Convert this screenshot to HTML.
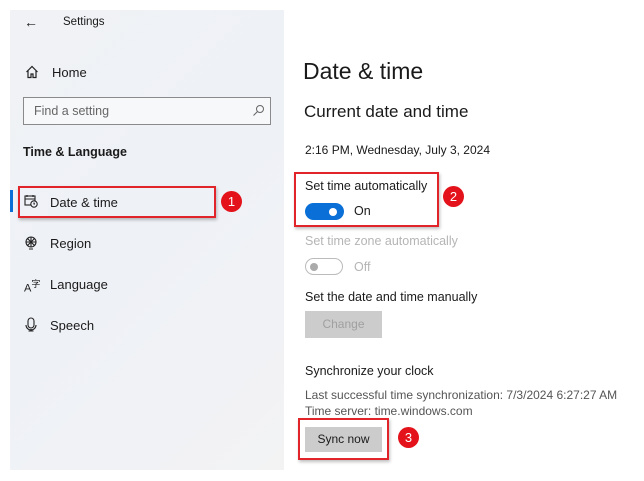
<!DOCTYPE html>
<html><head><meta charset="utf-8"><style>
*{margin:0;padding:0;box-sizing:border-box}
body{width:644px;height:481px;background:#fff;font-family:"Liberation Sans",sans-serif;color:#1a1a1a;position:relative;overflow:hidden}
.a{position:absolute;white-space:nowrap}
#side{position:absolute;left:10px;top:10px;width:274px;height:460px;background:linear-gradient(135deg,#f0f2f5,#eef1f6 50%,#f3f3f4)}
.box{position:absolute;border:2px solid #e0242a;box-shadow:1px 2px 3px rgba(0,0,0,.25)}
.badge{position:absolute;width:21px;height:21px;border-radius:50%;background:#e4121a;color:#fff;font-size:13px;text-align:center;line-height:21px}
.btn{position:absolute;background:#cccccc;font-size:12px;text-align:center}
</style></head><body>
<div id="side"></div>
<div class="a" style="left:24px;top:14px;font-size:14px">←</div>
<div class="a" style="left:63px;top:16px;font-size:11.5px">Settings</div>
<svg class="a" style="left:25px;top:65px" width="14" height="14" viewBox="0 0 14 14" fill="none" stroke="#222" stroke-width="1.2"><path d="M1.5 7L7 1.5 12.5 7M3 5.5V12.5H6V9H8V12.5H11V5.5"/></svg>
<div class="a" style="left:52px;top:65px;font-size:13px">Home</div>
<div class="a" style="left:23px;top:97px;width:248px;height:28px;border:1px solid #8a8a8a;background:#f7f8fa"></div>
<div class="a" style="left:34px;top:104px;font-size:12.5px;color:#666">Find a setting</div>
<svg class="a" style="left:252px;top:104px" width="13" height="13" viewBox="0 0 13 13" fill="none" stroke="#666" stroke-width="1"><circle cx="8" cy="5" r="3.5"/><path d="M5.5 7.5L1.5 11.5"/></svg>
<div class="a" style="left:23px;top:145px;font-size:12.5px;font-weight:bold">Time &amp; Language</div>
<div class="a" style="left:10px;top:190px;width:3px;height:22px;background:#0a6fd6"></div>
<svg class="a" style="left:24px;top:194px" width="14" height="14" viewBox="0 0 14 14" fill="none" stroke="#222" stroke-width="1.1"><rect x="1" y="2" width="10" height="9"/><path d="M1 5H11M3 1V3M9 1V3"/><circle cx="10" cy="10" r="3.2" fill="#eef1f6"/><path d="M10 8.5V10H11"/></svg>
<div class="a" style="left:50px;top:195px;font-size:13px">Date &amp; time</div>
<div class="box" style="left:18px;top:186px;width:198px;height:32px"></div>
<div class="badge" style="left:221px;top:191px">1</div>
<svg class="a" style="left:24px;top:236px" width="14" height="14" viewBox="0 0 14 14" fill="none" stroke="#222" stroke-width="1.1"><circle cx="7" cy="6" r="5"/><path d="M2 6H12M7 1V11M3.5 2.5L10.5 9.5M10.5 2.5L3.5 9.5M5 13H9"/></svg>
<div class="a" style="left:50px;top:236px;font-size:13px">Region</div>
<div class="a" style="left:24px;top:277px;font-size:11px">A<sup style="font-size:9px">字</sup></div>
<div class="a" style="left:50px;top:277px;font-size:13px">Language</div>
<svg class="a" style="left:25px;top:317px" width="12" height="15" viewBox="0 0 12 15" fill="none" stroke="#222" stroke-width="1.1"><rect x="3" y="1" width="6" height="10" rx="3"/><path d="M1 8a5 5 0 0 0 10 0M6 12V14M3.5 14H8.5"/></svg>
<div class="a" style="left:50px;top:318px;font-size:13px">Speech</div>

<div class="a" style="left:303px;top:58px;font-size:23px">Date &amp; time</div>
<div class="a" style="left:304px;top:102px;font-size:17px">Current date and time</div>
<div class="a" style="left:305px;top:143px;font-size:12px">2:16 PM, Wednesday, July 3, 2024</div>
<div class="box" style="left:294px;top:172px;width:145px;height:55px"></div>
<div class="a" style="left:305px;top:179px;font-size:12.5px">Set time automatically</div>
<div class="a" style="left:305px;top:203px;width:39px;height:17px;border-radius:9px;background:#0a6fd6"></div>
<div class="a" style="left:329px;top:208px;width:8px;height:8px;border-radius:50%;background:#fff"></div>
<div class="a" style="left:354px;top:204px;font-size:12.5px">On</div>
<div class="badge" style="left:443px;top:186px">2</div>
<div class="a" style="left:305px;top:234px;font-size:12.5px;color:#b5b5b5">Set time zone automatically</div>
<div class="a" style="left:305px;top:258px;width:38px;height:17px;border-radius:9px;border:1.5px solid #bbb"></div>
<div class="a" style="left:310px;top:263px;width:8px;height:8px;border-radius:50%;background:#aaa"></div>
<div class="a" style="left:354px;top:260px;font-size:12.5px;color:#b5b5b5">Off</div>
<div class="a" style="left:305px;top:290px;font-size:12.5px">Set the date and time manually</div>
<div class="btn" style="left:305px;top:311px;width:77px;height:27px;line-height:27px;color:#a0a0a0">Change</div>
<div class="a" style="left:305px;top:364px;font-size:12.5px">Synchronize your clock</div>
<div class="a" style="left:305px;top:388px;font-size:12px;color:#555">Last successful time synchronization: 7/3/2024 6:27:27 AM</div>
<div class="a" style="left:305px;top:404px;font-size:12px;color:#555">Time server: time.windows.com</div>
<div class="box" style="left:298px;top:418px;width:91px;height:42px"></div>
<div class="btn" style="left:305px;top:427px;width:77px;height:25px;line-height:25px;color:#1a1a1a">Sync now</div>
<div class="badge" style="left:398px;top:427px">3</div>
</body></html>
